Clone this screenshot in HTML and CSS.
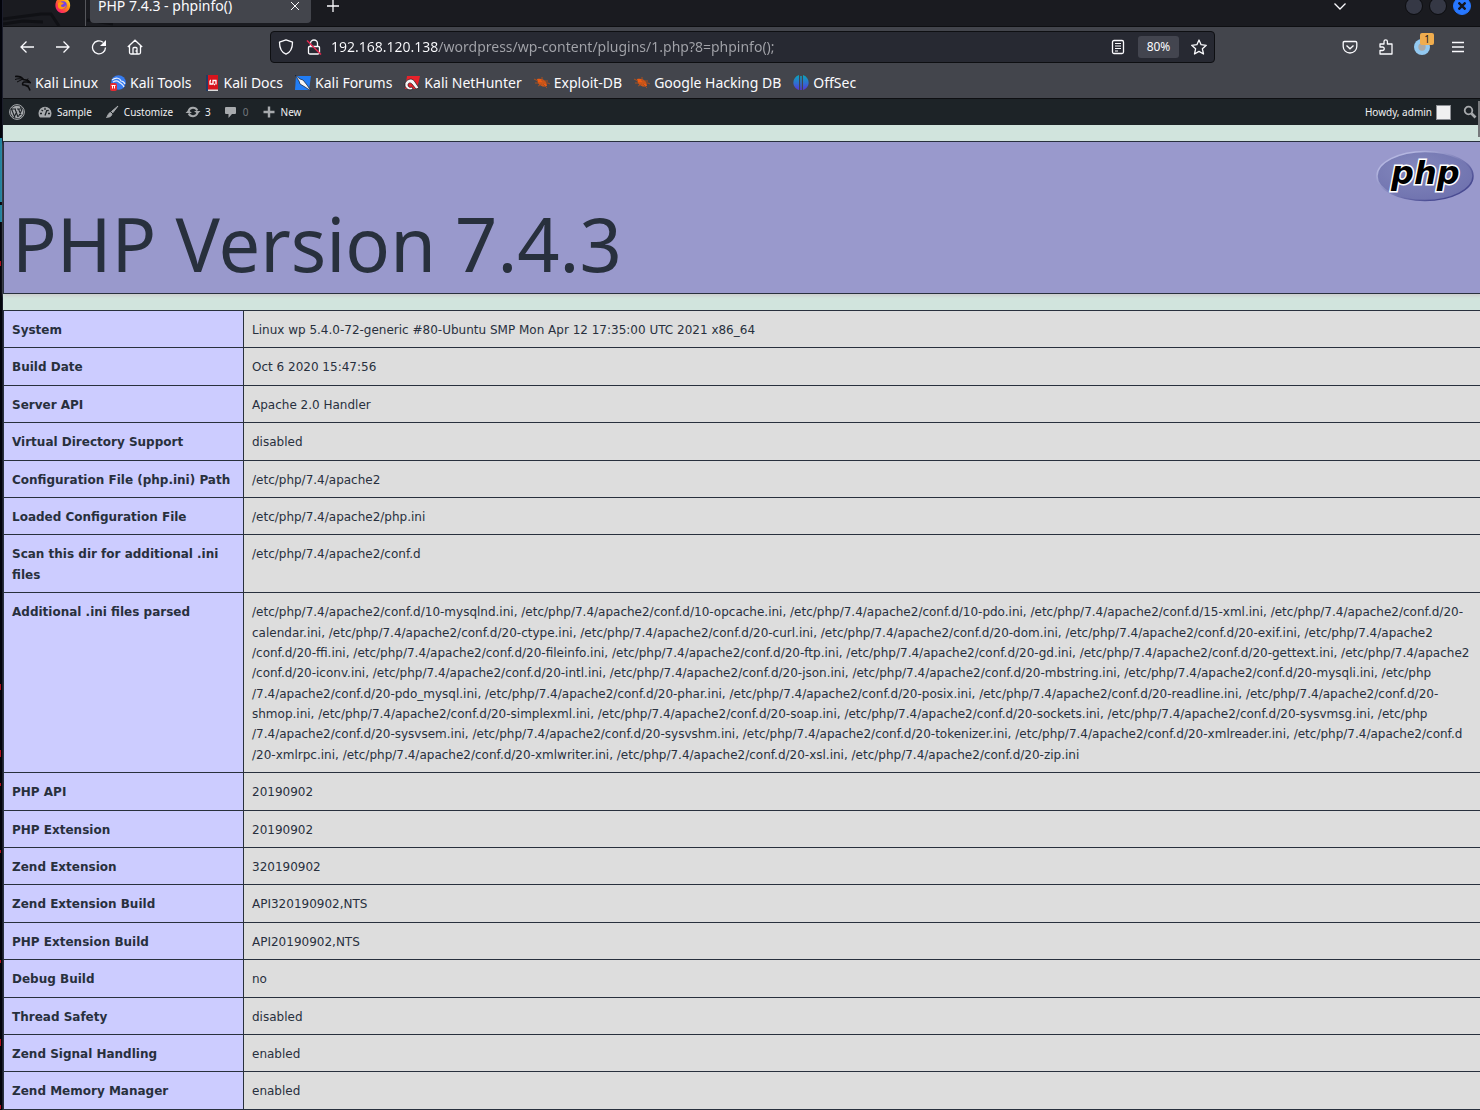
FILE: index.html
```html
<!DOCTYPE html>
<html lang="en">
<head>
<meta charset="utf-8">
<title>PHP 7.4.3 - phpinfo()</title>
<link rel="stylesheet" href="styles.css">
</head>
<body>
<div class="desktop">
<div class="edge" aria-hidden="true"></div>
<div class="window">
  <header class="tabs">
    <svg class="dragon" width="120" height="26" viewBox="0 0 120 26" aria-hidden="true"><g fill="none" stroke="#101115" stroke-width="3"><path d="M0 19 38 14 48 14 56 26M0 24 20 21 40 22M84 20l26 4"/></g></svg>
    <button class="pinned" aria-label="Pinned tab">
      <svg width="16" height="16" viewBox="0 0 16 16"><defs><linearGradient id="fx" x1="1" y1="0" x2="0" y2="1"><stop offset="0" stop-color="#fff44f"/><stop offset=".35" stop-color="#ff980e"/><stop offset=".7" stop-color="#ff3750"/><stop offset="1" stop-color="#e31587"/></linearGradient></defs><path d="M8 2C11 0 12 2 14 4c3 5 0 12-6 12S-1 10 1 5c0-1 1-2 2-3 1 2 3 0 5 0z" fill="url(#fx)"/><circle cx="8" cy="8" r="3.8" fill="#7542e5"/><path d="M3 6c3-2 4 0 6 0-1 2-3 1-3 3 1 2 4 1 5-1 0 4-6 6-8 2z" fill="#ff980e"/></svg>
    </button>
    <div class="tab"><span class="tab-title">PHP 7.4.3 - phpinfo()</span>
      <button class="icon-btn tab-close" aria-label="Close tab"><svg width="8" height="8" viewBox="0 0 8 8"><path d="M0 0l8 8M8 0L0 8" stroke="#fbfbfe" stroke-width="1"/></svg></button></div>
    <button class="icon-btn new-tab" aria-label="New tab"><svg width="12" height="12" viewBox="0 0 12 12"><path d="M6 0v12M0 6h12" stroke="#fbfbfe" stroke-width="1.3"/></svg></button>
    <div class="win-controls">
      <button class="icon-btn list-tabs" aria-label="List all tabs"><svg width="12" height="7" viewBox="0 0 12 7"><path d="M.5.5 6 6 11.5.5" fill="none" stroke="#fbfbfe" stroke-width="1.3"/></svg></button>
      <button class="round" aria-label="Minimize"></button>
      <button class="round" aria-label="Maximize"></button>
      <button class="round close" aria-label="Close"><svg width="8" height="8" viewBox="0 0 8 8"><path d="M.5.5l7 7M7.5.5l-7 7" stroke="#15161e" stroke-width="2.4"/></svg></button>
    </div>
  </header>

  <nav class="toolbar">
    <div class="nav-left">
      <button class="icon-btn" aria-label="Back"><svg width="16" height="16" viewBox="0 0 16 16"><path d="M15 8H2M7.5 2.500 2 8l5.500 5.500"/></svg></button>
      <button class="icon-btn" aria-label="Forward"><svg width="16" height="16" viewBox="0 0 16 16"><path d="M1 8h13M8.5 2.500 14 8l-5.500 5.500"/></svg></button>
      <button class="icon-btn" aria-label="Reload"><svg width="16" height="16" viewBox="0 0 16 16"><path d="M14.500 8.500A6.500 6.500 0 1 1 12 3.200"/><path class="solid" d="M15 1v6H9z"/></svg></button>
      <button class="icon-btn" aria-label="Home"><svg width="16" height="16" viewBox="0 0 16 16"><path d="M.8 8 8 1.200 15.200 8M2.500 6.800V13.500q0 1.500 1.500 1.500h8q1.500 0 1.500-1.500V6.800M6 15v-5.500q0-1 1-1h2q1 0 1 1V15M8.500 12h1"/></svg></button>
    </div>
    <div class="urlbar">
      <button class="icon-btn" aria-label="Tracking protection"><svg width="16" height="16" viewBox="0 0 16 16"><path d="M8 .8 14.500 3.200c0 6-1.800 10-6.500 12C3.300 13.200 1.500 9.200 1.500 3.200z" stroke-linejoin="round"/></svg></button>
      <button class="icon-btn" aria-label="Connection not secure"><svg width="16" height="16" viewBox="0 0 16 16"><path d="M4.500 7.500V4.500a3.500 3.500 0 0 1 7 0v3M2.500 8.500q0-1 1-1h9q1 0 1 1v5q0 1.500-1.500 1.500H4q-1.500 0-1.500-1.500z"/><path class="strike" d="M1 1.500l14 14"/></svg></button>
      <input class="url" type="text" aria-label="Address" value="192.168.120.138/wordpress/wp-content/plugins/1.php?8=phpinfo();">
      <button class="icon-btn" aria-label="Reader view"><svg width="16" height="16" viewBox="0 0 16 16"><rect x="2.500" y="1.500" width="11" height="13" rx="1.500"/><path class="thin" d="M5 4.500h6M5 7h6M5 9.500h6M5 12h3"/></svg></button>
      <button class="zoom">80%</button>
      <button class="icon-btn" aria-label="Bookmark this page"><svg width="16" height="16" viewBox="0 0 16 16"><path d="M8 1l2.100 4.700 5.200.6-3.900 3.500 1.100 5.200L8 12.400 3.500 15l1.100-5.200L.7 6.300l5.200-.6z" stroke-linejoin="round"/></svg></button>
    </div>
    <div class="nav-right">
      <button class="icon-btn" aria-label="Save to Pocket"><svg width="16" height="16" viewBox="0 0 16 16"><path d="M2.500 2.500h11q1.300 0 1.300 1.300V7.500a6.800 6.500 0 0 1-13.600 0V3.800q0-1.300 1.300-1.300zM4.500 6.500 8 9.800l3.500-3.300"/></svg></button>
      <button class="icon-btn" aria-label="Extensions"><svg width="16" height="16" viewBox="0 0 16 16"><path d="M2 15V11.500h2.500a1.700 1.700 0 0 0 0-3.500H2V5h4V2.500a1.700 1.700 0 0 1 3.400 0V5H14v10z" stroke-linejoin="round"/></svg></button>
      <button class="icon-btn proxy" aria-label="Proxy extension"><svg width="16" height="16" viewBox="0 0 16 16"><circle cx="8" cy="8" r="8" fill="#93c9f1"/><circle cx="8" cy="8" r="3.700" fill="#aaa9a7"/></svg><span class="badge">1</span></button>
      <button class="icon-btn" aria-label="Menu"><svg width="16" height="16" viewBox="0 0 16 16"><path d="M2 3.500h12M2 8h12M2 12.500h12"/></svg></button>
    </div>
  </nav>

  <nav class="bookmarks">
    <a href="#"><svg width="16" height="16" viewBox="0 0 16 16"><g fill="none" stroke="#0b0b0d"><path d="M0 1.500c4-.5 7 1 8.500 3L13 5.500l2 2-3-.5-3 0c-2 1-2 3 0 3 3 0 5 2 6 5.500" stroke-width="1.600"/><path d="M0 4.500c3-1 5-1 8 0M2 7l5-2.500M12 5l1-1.500M10.500 11l3.500 0"/></g></svg>Kali Linux</a>
    <a href="#"><svg width="16" height="16" viewBox="0 0 16 16"><circle cx="8.500" cy="7.500" r="7.300" fill="#367bf0"/><path d="M2 5c4-3 8-2 9 1 2 0 3 1 4 3M3 7c3-2 5-1 6 0 2 2 4 2 5 5" fill="none" stroke="#e8eefa" stroke-width="1.200"/><rect y="8" width="7" height="8" rx="2" fill="#e52a32"/><path d="M1.500 10.500h4M2.500 10.500v3M4.500 10.500v3" stroke="#fff" fill="none"/></svg>Kali Tools</a>
    <a href="#"><svg width="16" height="16" viewBox="0 0 16 16"><path d="M2 0h12v16H2z" fill="#d8141c"/><path d="M2 0h2v16H2z" fill="#233b63"/><path d="M4 14.500h10V16H4z" fill="#ddd"/><path d="M6 5.500v3.500h3V5.500h3v4M6 5.500l1 0M11 9.500h-1" fill="none" stroke="#fff" stroke-width="1.300"/></svg>Kali Docs</a>
    <a href="#"><svg width="16" height="16" viewBox="0 0 16 16"><path d="M1 1h15l-2 14H0z" fill="#217df5"/><path d="M0 0l5 4 3 1 4 5 4 6-6-4-5-3-1-3z" fill="#f5f5f5" stroke="#101a30" stroke-width=".7"/></svg>Kali Forums</a>
    <a href="#"><svg width="16" height="16" viewBox="0 0 16 16"><path d="M3 1h13l-3 13H1z" fill="#e8222b"/><path d="M1 8c3-5 8-5 10-1l4 6-3 1-4-5c-2-2-4-1-4 1s2 3 4 2l1 2c-3 2-7 0-8-3z" fill="#f5f5f5" stroke="#221015" stroke-width=".7"/></svg>Kali NetHunter</a>
    <a href="#"><svg width="16" height="16" viewBox="0 0 16 16"><path class="bug" d="M3 4c3-1 7 0 9 3l1 4c-3 1-7 0-9-3z"/><path class="legs" d="M1 8h13l2 1M0 4l4 2M4 11l4-2M8 2v4l6 0M9 12V9l4 4"/></svg>Exploit-DB</a>
    <a href="#"><svg width="16" height="16" viewBox="0 0 16 16"><path class="bug" d="M3 4c3-1 7 0 9 3l1 4c-3 1-7 0-9-3z"/><path class="legs" d="M1 8h13l2 1M0 4l4 2M4 11l4-2M8 2v4l6 0M9 12V9l4 4"/></svg>Google Hacking DB</a>
    <a href="#"><svg width="16" height="16" viewBox="0 0 16 16"><defs><linearGradient id="os" gradientUnits="userSpaceOnUse" x1="0" y1="0" x2="0" y2="16"><stop offset="0" stop-color="#0ba5b8"/><stop offset=".5" stop-color="#2f70d0"/><stop offset="1" stop-color="#5a2ed8"/></linearGradient></defs><path d="M6 0v15C-1 13-2 3 6 0zM7.200 1h1.600v14H7.200zM10 0c8 3 7 13 0 15z" fill="url(#os)"/></svg>OffSec</a>
  </nav>

  <nav class="adminbar">
    <a href="#" aria-label="About WordPress"><svg width="16" height="16" viewBox="0 0 16 16"><circle cx="8" cy="8" r="7.400" fill="none" stroke="#a7aaad"/><circle cx="8" cy="8" r="6.300" fill="#a7aaad"/><path d="M2.500 5l3.500 9M6 5l3 8M9.500 5l2.500 6M5.500 12.500l2.300-5M9.500 12.500 12.800 6 11.500 3M1.500 5H7M8 5h3.500" fill="none" stroke="#1d2327" stroke-width="1.100"/></svg></a>
    <a href="#"><svg width="16" height="16" viewBox="0 0 16 16"><path d="M3 13.500A6.500 6.500 0 1 1 13 13.500z" fill="#a7aaad"/><path d="M8 11.500 10 6M3 9.500h2M11 9.500h2M4.500 6 6 7M8 3.800V6M11.500 6l-1 1" stroke="#1d2327" stroke-width="1.300"/></svg>Sample</a>
    <a href="#"><svg width="16" height="16" viewBox="0 0 16 16"><path d="M14 2 7.500 7.500 8.800 8.800zM6.500 8.500 8 10C7 13.500 4 13 2.500 13.500 4 12 4 9 6.500 8.500z" fill="#a7aaad" stroke="#a7aaad"/></svg>Customize</a>
    <a href="#"><svg width="16" height="16" viewBox="0 0 16 16"><path d="M3.500 7a4.800 4.800 0 0 1 8.800-.5M12.500 9A4.800 4.800 0 0 1 3.700 9.500" fill="none" stroke="#a7aaad" stroke-width="2"/><path d="M9 7h6.500l-3 3zM.5 9H7l-3.500-3z" fill="#a7aaad"/></svg>3</a>
    <a href="#" class="dim"><svg width="16" height="16" viewBox="0 0 16 16"><path d="M3 3h9q1 0 1 1v5q0 1-1 1H9l-3.500 4V10H3q-1 0-1-1V4q0-1 1-1z" fill="#a7aaad"/></svg>0</a>
    <a href="#"><svg width="16" height="16" viewBox="0 0 16 16"><path d="M8 2.500v11M2.500 8h11" stroke="#a7aaad" stroke-width="2.400"/></svg>New</a>
    <a href="#" class="account">Howdy, admin<span class="avatar"></span></a>
    <a href="#" aria-label="Search"><svg width="14" height="14" viewBox="0 0 14 14"><circle cx="5.500" cy="5.500" r="3.800" fill="none" stroke="#a7aaad" stroke-width="1.800"/><path d="M8.500 8.500l4 4" stroke="#a7aaad" stroke-width="2.600"/></svg></a>
  </nav>
  <span class="scroll-thumb"></span>

  <main class="page">
    <section class="banner">
      <svg class="php-logo" width="98" height="52" viewBox="0 0 98 52" role="img" aria-label="PHP logo"><defs><radialGradient id="pg" cx=".4" cy=".35" r=".75"><stop offset="0" stop-color="#8488bd"/><stop offset="1" stop-color="#6d70ad"/></radialGradient><linearGradient id="pr" x1="0" y1="0" x2="1" y2="1"><stop offset=".2" stop-color="#b4b6e0"/><stop offset=".8" stop-color="#484a91"/></linearGradient></defs><ellipse cx="49" cy="26" rx="48" ry="24.500" fill="url(#pg)" stroke="url(#pr)" stroke-width="1.500"/><text class="logo-text" x="15" y="34">php</text></svg>
      <h1>PHP Version 7.4.3</h1>
    </section>
    <table class="info">
      <tbody>
      <tr><th scope="row">System</th><td>Linux wp 5.4.0-72-generic #80-Ubuntu SMP Mon Apr 12 17:35:00 UTC 2021 x86_64</td></tr>
      <tr><th scope="row">Build Date</th><td>Oct 6 2020 15:47:56</td></tr>
      <tr><th scope="row">Server API</th><td>Apache 2.0 Handler</td></tr>
      <tr><th scope="row">Virtual Directory Support</th><td>disabled</td></tr>
      <tr><th scope="row">Configuration File (php.ini) Path</th><td>/etc/php/7.4/apache2</td></tr>
      <tr><th scope="row">Loaded Configuration File</th><td>/etc/php/7.4/apache2/php.ini</td></tr>
      <tr><th scope="row">Scan this dir for additional .ini files</th><td>/etc/php/7.4/apache2/conf.d</td></tr>
      <tr><th scope="row">Additional .ini files parsed</th><td>/etc/php/7.4/apache2/conf.d/10-mysqlnd.ini, /etc/php/7.4/apache2/conf.d/10-opcache.ini, /etc/php/7.4/apache2/conf.d/10-pdo.ini, /etc/php/7.4/apache2/conf.d/15-xml.ini, /etc/php/7.4/apache2/conf.d/20-<br>calendar.ini, /etc/php/7.4/apache2/conf.d/20-ctype.ini, /etc/php/7.4/apache2/conf.d/20-curl.ini, /etc/php/7.4/apache2/conf.d/20-dom.ini, /etc/php/7.4/apache2/conf.d/20-exif.ini, /etc/php/7.4/apache2<br>/conf.d/20-ffi.ini, /etc/php/7.4/apache2/conf.d/20-fileinfo.ini, /etc/php/7.4/apache2/conf.d/20-ftp.ini, /etc/php/7.4/apache2/conf.d/20-gd.ini, /etc/php/7.4/apache2/conf.d/20-gettext.ini, /etc/php/7.4/apache2<br>/conf.d/20-iconv.ini, /etc/php/7.4/apache2/conf.d/20-intl.ini, /etc/php/7.4/apache2/conf.d/20-json.ini, /etc/php/7.4/apache2/conf.d/20-mbstring.ini, /etc/php/7.4/apache2/conf.d/20-mysqli.ini, /etc/php<br>/7.4/apache2/conf.d/20-pdo_mysql.ini, /etc/php/7.4/apache2/conf.d/20-phar.ini, /etc/php/7.4/apache2/conf.d/20-posix.ini, /etc/php/7.4/apache2/conf.d/20-readline.ini, /etc/php/7.4/apache2/conf.d/20-<br>shmop.ini, /etc/php/7.4/apache2/conf.d/20-simplexml.ini, /etc/php/7.4/apache2/conf.d/20-soap.ini, /etc/php/7.4/apache2/conf.d/20-sockets.ini, /etc/php/7.4/apache2/conf.d/20-sysvmsg.ini, /etc/php<br>/7.4/apache2/conf.d/20-sysvsem.ini, /etc/php/7.4/apache2/conf.d/20-sysvshm.ini, /etc/php/7.4/apache2/conf.d/20-tokenizer.ini, /etc/php/7.4/apache2/conf.d/20-xmlreader.ini, /etc/php/7.4/apache2/conf.d<br>/20-xmlrpc.ini, /etc/php/7.4/apache2/conf.d/20-xmlwriter.ini, /etc/php/7.4/apache2/conf.d/20-xsl.ini, /etc/php/7.4/apache2/conf.d/20-zip.ini</td></tr>
      <tr><th scope="row">PHP API</th><td>20190902</td></tr>
      <tr><th scope="row">PHP Extension</th><td>20190902</td></tr>
      <tr><th scope="row">Zend Extension</th><td>320190902</td></tr>
      <tr><th scope="row">Zend Extension Build</th><td>API320190902,NTS</td></tr>
      <tr><th scope="row">PHP Extension Build</th><td>API20190902,NTS</td></tr>
      <tr><th scope="row">Debug Build</th><td>no</td></tr>
      <tr><th scope="row">Thread Safety</th><td>disabled</td></tr>
      <tr><th scope="row">Zend Signal Handling</th><td>enabled</td></tr>
      <tr><th scope="row">Zend Memory Manager</th><td>enabled</td></tr>
      </tbody>
    </table>
  </main>
</div>
</div>
</body>
</html>
```
FILE: styles.css
```css
* { box-sizing: border-box; }
html, body { margin: 0; height: 100%; }
body { overflow: hidden; background: #15161e; color: #28303d; font-family: "Noto Sans", sans-serif; }
a { color: inherit; text-decoration: none; }
button { font: inherit; color: inherit; border: 0; padding: 0; background: none; }
svg { display: block; flex: none; }

.desktop { display: flex; min-height: 100%; }
.edge {
  flex: none; width: 3px; border-right: 1px solid #1b1d2b;
  background:
    linear-gradient(#23829e, #23829e) 0 138px / 2px 64px no-repeat,
    linear-gradient(#23829e, #23829e) 0 205px / 2px 17px no-repeat,
    linear-gradient(#b01020, #b01020) 0 261px / 1px 5px no-repeat,
    linear-gradient(#b01020, #b01020) 0 684px / 1px 6px no-repeat,
    linear-gradient(#b01020, #b01020) 0 750px / 1px 7px no-repeat,
    linear-gradient(#b01020, #b01020) 0 783px / 1px 3px no-repeat,
    linear-gradient(#b01020, #b01020) 0 850px / 1px 3px no-repeat,
    linear-gradient(#b01020, #b01020) 0 960px / 1px 3px no-repeat,
    linear-gradient(#b01020, #b01020) 0 1039px / 1px 7px no-repeat,
    linear-gradient(#b01020, #b01020) 0 1105px / 1px 4px no-repeat,
    #03040b;
}
.window { flex: 1; min-width: 0; position: relative; }

.tabs { position: relative; display: flex; align-items: flex-start; height: 27px; background: #1a1b20; border-bottom: 1px solid #0e0f12; color: #fbfbfe; }
.dragon { position: absolute; left: 0; top: 0; }
.pinned { position: relative; width: 83px; height: 26px; border-right: 1px solid #55565b; padding-left: 52px; flex: none; }
.pinned svg { margin-top: -16px; }
.tab { position: relative; display: flex; justify-content: space-between; width: 221px; height: 23px; margin-left: 4px; padding: 0 12px 0 8px; background: #43454c; border-radius: 0 0 4px 4px; font-size: 14px; line-height: 12px; }
.icon-btn { display: flex; align-items: center; justify-content: center; flex: none; }
.icon-btn path, .icon-btn rect { fill: none; }
.tab-close { height: 12px; }
.new-tab { margin-left: 16px; height: 12px; }
.win-controls { margin-left: auto; margin-right: 9px; display: flex; align-items: center; gap: 6px; height: 12px; }
.list-tabs { margin-right: 53px; }
.round { width: 18px; height: 18px; border-radius: 50%; background: #353845; border: 1px solid #0c0d10; flex: none; }
.round.close { background: #2777ff; border-color: #2777ff; display: flex; align-items: center; justify-content: center; }

.toolbar { display: flex; align-items: center; height: 40px; background: #43454c; padding: 0 14px 0 16px; }
.toolbar .icon-btn path, .toolbar .icon-btn rect { stroke: #fbfbfe; stroke-width: 1.3; }
.toolbar .icon-btn .solid { fill: #fbfbfe; stroke: none; }
.toolbar .icon-btn .strike { stroke: #e22850; stroke-width: 1.5; }
.toolbar .icon-btn .thin { stroke-width: 1; }
.nav-left, .nav-right { display: flex; align-items: center; gap: 20px; }
.nav-left { width: 251px; }
.urlbar { display: flex; align-items: center; flex: 1; height: 32px; padding: 0 7px; gap: 12px; background: #272932; border: 1px solid #0e0f12; border-radius: 4px; }
.url { flex: 1; min-width: 0; margin-left: -3px; border: 0; padding: 0; outline: 0; font: 14px/20px "Noto Sans", sans-serif; color: transparent; background: linear-gradient(90deg, #fbfbfe 108px, #a3a4aa 108px); -webkit-background-clip: text; background-clip: text; }
.zoom { width: 41px; height: 22px; border-radius: 3px; background: #43454f; color: #fbfbfe; font-size: 12px; line-height: 22px; }
.nav-right { margin-left: 127px; }
.proxy { position: relative; }
.badge { position: absolute; left: 6px; top: -6px; width: 14px; height: 12px; border-radius: 2px; background: #f0ad4e; color: #15161e; font-size: 10px; line-height: 12px; text-align: center; }

.bookmarks { display: flex; align-items: center; gap: 12px; height: 32px; padding-left: 12px; background: #43454c; border-bottom: 1px solid #0e0f12; color: #fbfbfe; font-size: 14px; white-space: nowrap; }
.bookmarks a { display: flex; align-items: center; gap: 4px; }
.bug { fill: #ee5a12; }
.legs { fill: none; stroke: #a9501f; stroke-width: 1; }

.adminbar { display: flex; align-items: center; gap: 12px; height: 26px; padding: 0 3px 0 6px; background: #1d2327; color: #f0f0f1; font-size: 10px; white-space: nowrap; }
.adminbar a { display: flex; align-items: center; gap: 4px; }
.adminbar .dim { color: #72777c; }
.adminbar .account { margin-left: auto; }
.avatar { width: 15px; height: 15px; background: #f0f0f1; border: 1px solid #8c8f94; }
.scroll-thumb { position: absolute; right: 0; top: 101px; width: 2px; height: 36px; background: #77797c; }

.page { background: #d1e4dd; padding-top: 16px; }
.banner { position: relative; height: 153px; margin-bottom: 16px; padding: 64px 8px 0; background: #9999cc; border: 1px solid #28303d; border-right: 0; box-shadow: 1px 2px 3px #cccccc; }
.php-logo { position: absolute; right: 6px; top: 8px; }
.logo-text { font: italic bold 32px "DejaVu Sans", sans-serif; fill: #000; stroke: #fff; stroke-width: 3px; paint-order: stroke; }
h1 { margin: 0; font-size: 74px; font-weight: 400; line-height: 76px; }
.info { width: 100%; border-collapse: collapse; table-layout: fixed; font: 12px/1.7 "DejaVu Sans", sans-serif; background: #dddddd; }
.info th, .info td { border: 1px solid #28303d; padding: 9px 8px 7px; vertical-align: top; text-align: left; }
.info th { width: 240px; background: #ccccff; }
.info td { white-space: nowrap; border-right: 0; }
```
